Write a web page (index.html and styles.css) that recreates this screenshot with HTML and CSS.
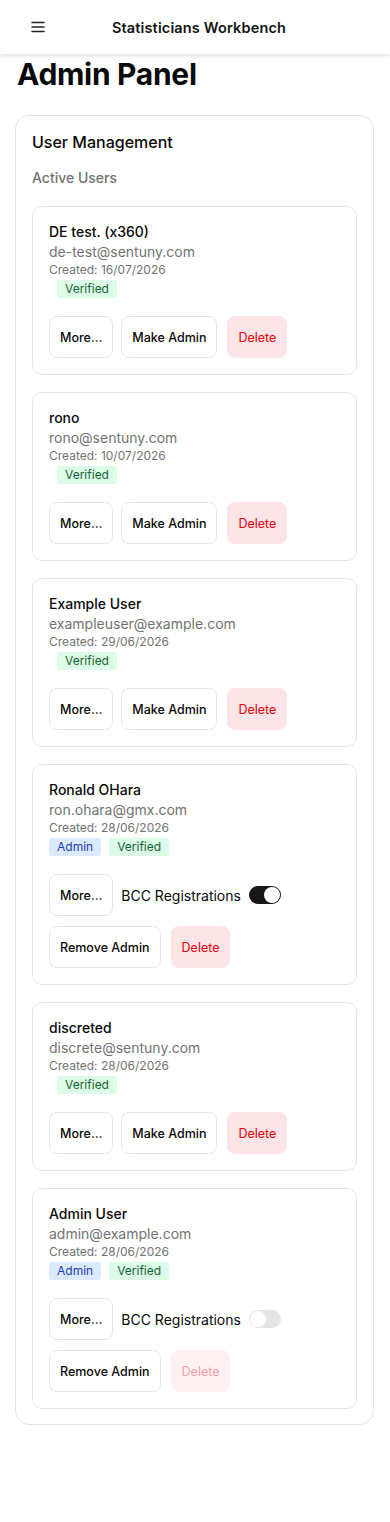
FILE: index.html
```html
<!DOCTYPE html>
<html lang="en">
<head>
    <meta charset="UTF-8">
    <meta name="viewport" content="width=device-width, initial-scale=1.0">
    <title>Admin Panel - Statisticians Workbench</title>
    <link rel="stylesheet" href="styles.css">
</head>
<body>
    <div class="topbar">
        <button class="menu-btn" aria-label="Menu">
            <svg width="14" height="12" viewBox="0 0 14 12">
                <path d="M1 1.5h12M1 6h12M1 10.5h12" stroke="#222" stroke-width="1.5" stroke-linecap="round"/>
            </svg>
        </button>
        <div class="brand">Statisticians Workbench</div>
    </div>

    <div class="page">
        <h1>Admin Panel</h1>

        <div class="panel">
            <h2>User Management</h2>
            <h3>Active Users</h3>

            <div class="user-list">
                <div class="user-card">
                    <div class="user-name">DE test. (x360)</div>
                    <div class="user-email">de-test@sentuny.com</div>
                    <div class="user-date">Created: 16/07/2026</div>
                    <div class="badges"><span class="badge verified">Verified</span></div>
                    <div class="actions">
                        <div class="row">
                            <button class="btn">More…</button>
                            <button class="btn">Make Admin</button>
                            <button class="btn danger">Delete</button>
                        </div>
                    </div>
                </div>

                <div class="user-card">
                    <div class="user-name">rono</div>
                    <div class="user-email">rono@sentuny.com</div>
                    <div class="user-date">Created: 10/07/2026</div>
                    <div class="badges"><span class="badge verified">Verified</span></div>
                    <div class="actions">
                        <div class="row">
                            <button class="btn">More…</button>
                            <button class="btn">Make Admin</button>
                            <button class="btn danger">Delete</button>
                        </div>
                    </div>
                </div>

                <div class="user-card">
                    <div class="user-name">Example User</div>
                    <div class="user-email">exampleuser@example.com</div>
                    <div class="user-date">Created: 29/06/2026</div>
                    <div class="badges"><span class="badge verified">Verified</span></div>
                    <div class="actions">
                        <div class="row">
                            <button class="btn">More…</button>
                            <button class="btn">Make Admin</button>
                            <button class="btn danger">Delete</button>
                        </div>
                    </div>
                </div>

                <div class="user-card">
                    <div class="user-name">Ronald OHara</div>
                    <div class="user-email">ron.ohara@gmx.com</div>
                    <div class="user-date">Created: 28/06/2026</div>
                    <div class="badges"><span class="badge admin">Admin</span><span class="badge verified">Verified</span></div>
                    <div class="actions">
                        <div class="row">
                            <button class="btn">More…</button>
                            <label class="bcc">BCC Registrations <span class="switch on"></span></label>
                        </div>
                        <div class="row">
                            <button class="btn">Remove Admin</button>
                            <button class="btn danger">Delete</button>
                        </div>
                    </div>
                </div>

                <div class="user-card">
                    <div class="user-name">discreted</div>
                    <div class="user-email">discrete@sentuny.com</div>
                    <div class="user-date">Created: 28/06/2026</div>
                    <div class="badges"><span class="badge verified">Verified</span></div>
                    <div class="actions">
                        <div class="row">
                            <button class="btn">More…</button>
                            <button class="btn">Make Admin</button>
                            <button class="btn danger">Delete</button>
                        </div>
                    </div>
                </div>

                <div class="user-card">
                    <div class="user-name">Admin User</div>
                    <div class="user-email">admin@example.com</div>
                    <div class="user-date">Created: 28/06/2026</div>
                    <div class="badges"><span class="badge admin">Admin</span><span class="badge verified">Verified</span></div>
                    <div class="actions">
                        <div class="row">
                            <button class="btn">More…</button>
                            <label class="bcc">BCC Registrations <span class="switch"></span></label>
                        </div>
                        <div class="row">
                            <button class="btn">Remove Admin</button>
                            <button class="btn danger" disabled>Delete</button>
                        </div>
                    </div>
                </div>
            </div>
        </div>
    </div>
</body>
</html>
```

FILE: styles.css
```css
body {
    margin: 0;
    background: #fff;
    color: #0a0a0a;
    font-family: Inter, 'Noto Sans', sans-serif;
}

.topbar {
    height: 54px;
    display: flex;
    align-items: center;
    padding: 0 16px;
    background: #fff;
    box-shadow: 0 2px 4px rgba(0, 0, 0, 0.12);
    position: relative;
}

.menu-btn {
    width: 44px;
    height: 44px;
    border: none;
    background: none;
    padding: 0;
    display: flex;
    align-items: center;
    justify-content: center;
}

.brand {
    flex: 1;
    text-align: center;
    font-size: 14.5px;
    font-weight: 600;
    letter-spacing: 0.15px;
    margin-right: 36px;
    color: #141414;
}

.page {
    padding: 2px 16px 96px 15px;
}

h1 {
    margin: 0 0 23px 2px;
    font-size: 30px;
    line-height: 36px;
    font-weight: 700;
    letter-spacing: -0.3px;
}

.panel {
    border: 1px solid #e5e5e5;
    border-radius: 14px;
    padding: 15px 16px 15px;
}

.panel h2 {
    margin: 0;
    font-size: 16px;
    line-height: 22px;
    font-weight: 500;
}

.panel h3 {
    margin: 15px 0 18px;
    font-size: 14px;
    line-height: 20px;
    font-weight: 500;
    color: #737373;
}

.user-list {
    display: flex;
    flex-direction: column;
    gap: 17px;
}

.user-card {
    border: 1px solid #e5e5e5;
    border-radius: 10px;
    padding: 15px 16px 16px;
}

.user-name {
    font-size: 14px;
    line-height: 20px;
    font-weight: 500;
}

.user-email {
    font-size: 14px;
    line-height: 20px;
    color: #737373;
}

.user-date {
    font-size: 12px;
    line-height: 16px;
    color: #737373;
}

.badges {
    display: flex;
    margin-top: 2px;
}

.badge {
    font-size: 12px;
    line-height: 18px;
    padding: 0 8px;
    border-radius: 3px;
}

.badge.admin {
    background: #dbeafe;
    color: #1e40af;
}

.badge.verified {
    background: #dcfce7;
    color: #166534;
    margin-left: 8px;
}

.actions {
    display: flex;
    flex-direction: column;
    gap: 10px;
    margin-top: 18px;
}

.row {
    display: flex;
    align-items: center;
    gap: 8px;
}

.btn {
    height: 42px;
    padding: 0 10px;
    border: 1px solid #e5e5e5;
    border-radius: 8px;
    background: #fff;
    color: #0a0a0a;
    font-family: inherit;
    font-size: 12.5px;
    font-weight: 500;
    cursor: pointer;
}

.btn.danger {
    background: #fde4e6;
    border-color: #fde4e6;
    color: #e7000b;
    font-weight: 400;
    margin-left: 2px;
}

.btn.danger:disabled {
    background: #fef1f2;
    border-color: #fef1f2;
    color: #f6a0a5;
    cursor: default;
}

.bcc {
    display: flex;
    align-items: center;
    gap: 8px;
    font-size: 14px;
    color: #0a0a0a;
}

.switch {
    width: 32px;
    height: 18px;
    border-radius: 9px;
    background: #e5e5e5;
    position: relative;
}

.switch::after {
    content: "";
    position: absolute;
    top: 1px;
    left: 1px;
    width: 16px;
    height: 16px;
    border-radius: 50%;
    background: #fff;
}

.switch.on {
    background: #171717;
}

.switch.on::after {
    left: 15px;
}
```
